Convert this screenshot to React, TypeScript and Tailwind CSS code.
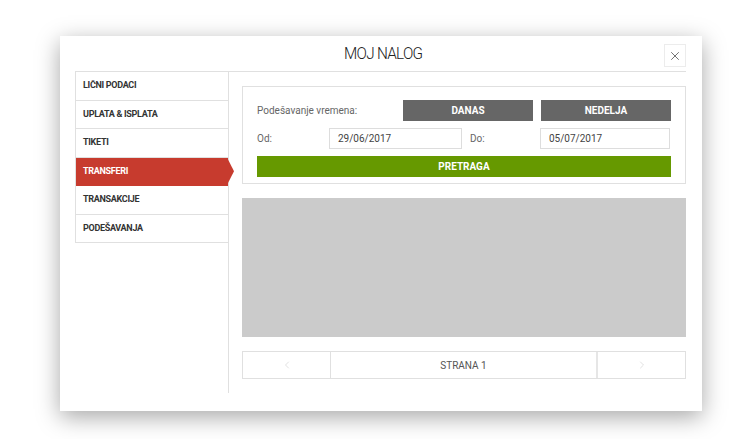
import { X, ChevronLeft, ChevronRight } from "lucide-react";

const menu = ["LIČNI PODACI", "UPLATA & ISPLATA", "TIKETI", "TRANSFERI", "TRANSAKCIJE", "PODEŠAVANJA"];

export default function App() {
  const active = "TRANSFERI";

  return (
    <div
      className="w-[731px] h-[439px] bg-white overflow-hidden pt-[36px] pl-[60px]"
      style={{ fontFamily: "Roboto, 'Liberation Sans', sans-serif" }}
    >
      <div className="w-[642px] h-[375px] bg-white pl-[15px] pr-[16px] shadow-[0_6px_22px_rgba(0,0,0,0.35)]">
        {/* zaglavlje */}
        <div className="h-[35px] flex items-center relative">
          <h1 className="flex-1 text-center text-[17px] font-light tracking-[-0.8px] text-[#222] pl-[6px] scale-x-90">MOJ NALOG</h1>
          <button className="absolute right-0 top-[8px] w-[22px] h-[23px] border border-[#ececec] flex items-center justify-center text-[#555]">
            <X size={14} strokeWidth={1.4} />
          </button>
        </div>

        <div className="flex border-t border-[#e0e0e0]">
          {/* meni */}
          <div className="w-[153px] self-start border-l border-[#e0e0e0]">
            {menu.map((item) => {
              const isActive = item === active;
              return (
                <div
                  key={item}
                  className={`relative h-[28.5px] flex items-center pl-[7px] text-[9px] font-bold tracking-[-0.3px] border-b ${
                    isActive ? "bg-[#c73b2e] text-white border-[#c73b2e]" : "text-[#333] border-[#e0e0e0]"
                  }`}
                >
                  {item}
                  {isActive && (
                    <span className="absolute right-[-6px] top-0 w-[7px] h-full bg-[#c73b2e] [clip-path:polygon(0_0,100%_50%,0_100%)]" />
                  )}
                </div>
              );
            })}
          </div>

          {/* sadržaj */}
          <div className="flex-1 h-[321px] border-l border-[#e0e0e0] pl-[13px] pt-[14px] flex flex-col gap-[14px]">
            <div className="border border-[#e0e0e0] pl-[14px] pr-[14px] pt-[13px] pb-[6px] flex flex-col gap-[7px] text-[10px]">
              <div className="flex items-center h-[21px]">
                <span className="flex-1 text-[#666]">Podešavanje vremena:</span>
                <button className="w-[130px] h-[21px] bg-[#666] text-white font-bold">DANAS</button>
                <button className="w-[130px] h-[21px] bg-[#666] text-white font-bold ml-[8px]">NEDELJA</button>
              </div>
              <div className="flex items-center h-[21px]">
                <span className="w-[72px] text-[#666]">Od:</span>
                <div className="w-[133px] h-[21px] border border-[#ddd] flex items-center pl-[8px] text-[#444]">29/06/2017</div>
                <span className="w-[70px] ml-[8px] text-[#666]">Do:</span>
                <div className="w-[130px] h-[21px] border border-[#ddd] flex items-center pl-[8px] text-[#444]">05/07/2017</div>
              </div>
              <button className="h-[21px] bg-[#669900] text-white font-bold">PRETRAGA</button>
            </div>

            <div className="h-[139px] bg-[#cbcbcb]" />

            <div className="h-[28px] flex border border-[#e0e0e0] text-[10px] text-[#555]">
              <div className="w-[88px] border-r border-[#e0e0e0] flex items-center justify-center text-[#ccc]">
                <ChevronLeft size={12} strokeWidth={1.2} />
              </div>
              <div className="flex-1 flex items-center justify-center">STRANA 1</div>
              <div className="w-[89px] border-l-2 border-[#e6e6e6] flex items-center justify-center text-[#ccc]">
                <ChevronRight size={12} strokeWidth={1.2} />
              </div>
            </div>
          </div>
        </div>
      </div>
    </div>
  );
}
